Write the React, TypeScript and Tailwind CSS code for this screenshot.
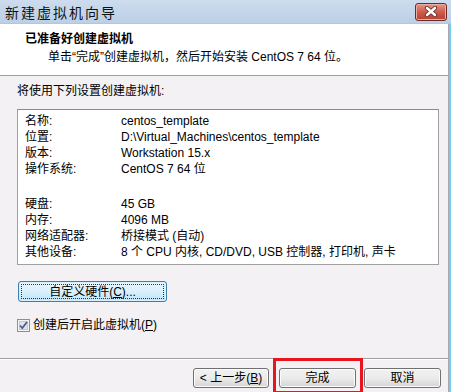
import React from 'react';

const font = "font-['Liberation_Sans','Noto_Sans_CJK_SC',sans-serif]";

const rows = [
  { label: '名称:', value: 'centos_template' },
  { label: '位置:', value: 'D:\\Virtual_Machines\\centos_template' },
  { label: '版本:', value: 'Workstation 15.x' },
  { label: '操作系统:', value: 'CentOS 7 64 位' },
];

const hardware = [
  { label: '硬盘:', value: '45 GB' },
  { label: '内存:', value: '4096 MB' },
  { label: '网络适配器:', value: '桥接模式 (自动)' },
  { label: '其他设备:', value: '8 个 CPU 内核, CD/DVD, USB 控制器, 打印机, 声卡' },
];

function WinButton({ children, className = '' }: { children: React.ReactNode; className?: string }) {
  return (
    <div
      className={`h-[20px] rounded-[3px] border border-[#707070] bg-gradient-to-b from-[#f2f2f2] via-[#ebebeb] to-[#d4d4d4] shadow-[inset_0_0_0_1px_#fcfcfc] flex items-center justify-center text-[12px] text-black ${className}`}
    >
      {children}
    </div>
  );
}

function Row({ label, value }: { label: string; value: string }) {
  return (
    <div className="flex h-[16px] items-center">
      <div className="w-[103px] pl-[7px] shrink-0">{label}</div>
      <div className="whitespace-nowrap">{value}</div>
    </div>
  );
}

export default function App() {
  return (
    <div className={`w-[451px] h-[392px] overflow-hidden flex flex-col bg-[#f4f1f5] ${font} text-[12px] text-black leading-[16px]`}>
      {/* Title bar */}
      <div className="h-[24px] shrink-0 flex items-center justify-between bg-gradient-to-b from-[#cddcee] to-[#bccfe6] border-b border-[#b3c6dc]">
        <span className="pl-[5px] text-[14px] tracking-[2px] text-[#111] font-['Noto_Sans_CJK_SC',sans-serif]">新建虚拟机向导</span>
        <div className="mr-[4px] w-[32px] h-[18px] rounded-[3px] border border-[#6e2a24] bg-gradient-to-b from-[#e3998a] via-[#cf5b4b] to-[#b8402f] shadow-[inset_0_0_0_1px_#eab0a4] flex items-center justify-center">
          <svg width="14" height="11" viewBox="0 0 14 11">
            <path d="M3 2 L11 9 M11 2 L3 9" stroke="#5a2620" strokeWidth="4.2" strokeLinecap="round" />
            <path d="M3 2 L11 9 M11 2 L3 9" stroke="#ffffff" strokeWidth="2.6" strokeLinecap="round" />
          </svg>
        </div>
      </div>

      <div className="flex flex-1 min-h-0">
        <div className="w-[448px] flex flex-col relative">
          {/* Header */}
          <div className="h-[52px] bg-white border-b border-[#a0a0a0] pt-[7px]">
            <div className="pl-[25px] font-bold leading-[16px]">已准备好创建虚拟机</div>
            <div className="pl-[48px] mt-[2px] leading-[16px]">单击“完成”创建虚拟机，然后开始安装 CentOS 7 64 位。</div>
          </div>

          {/* Body */}
          <div className="flex-1 pl-[17px] pt-[8px] flex flex-col">
            <div className="leading-[14px]">将使用下列设置创建虚拟机:</div>
            <div className="mt-[11px] w-[422px] h-[156px] border border-[#a0a0a0] border-t-[#8a8a8a] bg-white pt-[3px]">
              {rows.map((r) => (
                <Row key={r.label} {...r} />
              ))}
              <div className="h-[19px]" />
              {hardware.map((r) => (
                <Row key={r.label} {...r} />
              ))}
            </div>

            <div className="mt-[16px] ml-[1px] w-[149px] h-[21px] rounded-[3px] border border-[#3c7fb1] bg-gradient-to-b from-[#eaf6fd] via-[#d9f0fc] to-[#bee6fd] p-[2px] shadow-[inset_0_0_0_1px_#d6effc]">
              <div className="h-full border border-dotted border-[#333] flex items-center justify-center">
                自定义硬件(<span className="underline">C</span>)...
              </div>
            </div>

            <div className="mt-[15px] flex items-center gap-[3px]">
              <svg width="13" height="13" viewBox="0 0 13 13">
                <rect x="0.5" y="0.5" width="12" height="12" fill="#f4f4f4" stroke="#8e8f8f" />
                <rect x="2.5" y="2.5" width="8" height="8" fill="#e3e3e3" stroke="#c8c8c8" />
                <path d="M3 6.5 L5.3 9 L10 3" stroke="#4a5f97" strokeWidth="1.8" fill="none" />
              </svg>
              <span>创建后开启此虚拟机(<span className="underline">P</span>)</span>
            </div>
          </div>

          {/* Footer */}
          <div className="h-[34px] shrink-0 border-t border-[#a0a0a0] shadow-[inset_0_1px_0_#ffffff] flex items-start pt-[9px] pl-[193px] gap-[10px]">
            <WinButton className="w-[76px]">
              &lt; 上一步(<span className="underline">B</span>)
            </WinButton>
            <WinButton className="w-[77px]">完成</WinButton>
            <WinButton className="w-[77px] -ml-[2px]">取消</WinButton>
          </div>

          {/* Highlight annotation */}
          <div className="absolute left-[273px] top-[334px] w-[90px] h-[36px] border-[3px] border-[#e8141e]" />
        </div>
        <div className="w-[1px] bg-[#a8a8a8]" />
        <div className="w-[2px] bg-[#72cdf4]" />
      </div>
    </div>
  );
}
